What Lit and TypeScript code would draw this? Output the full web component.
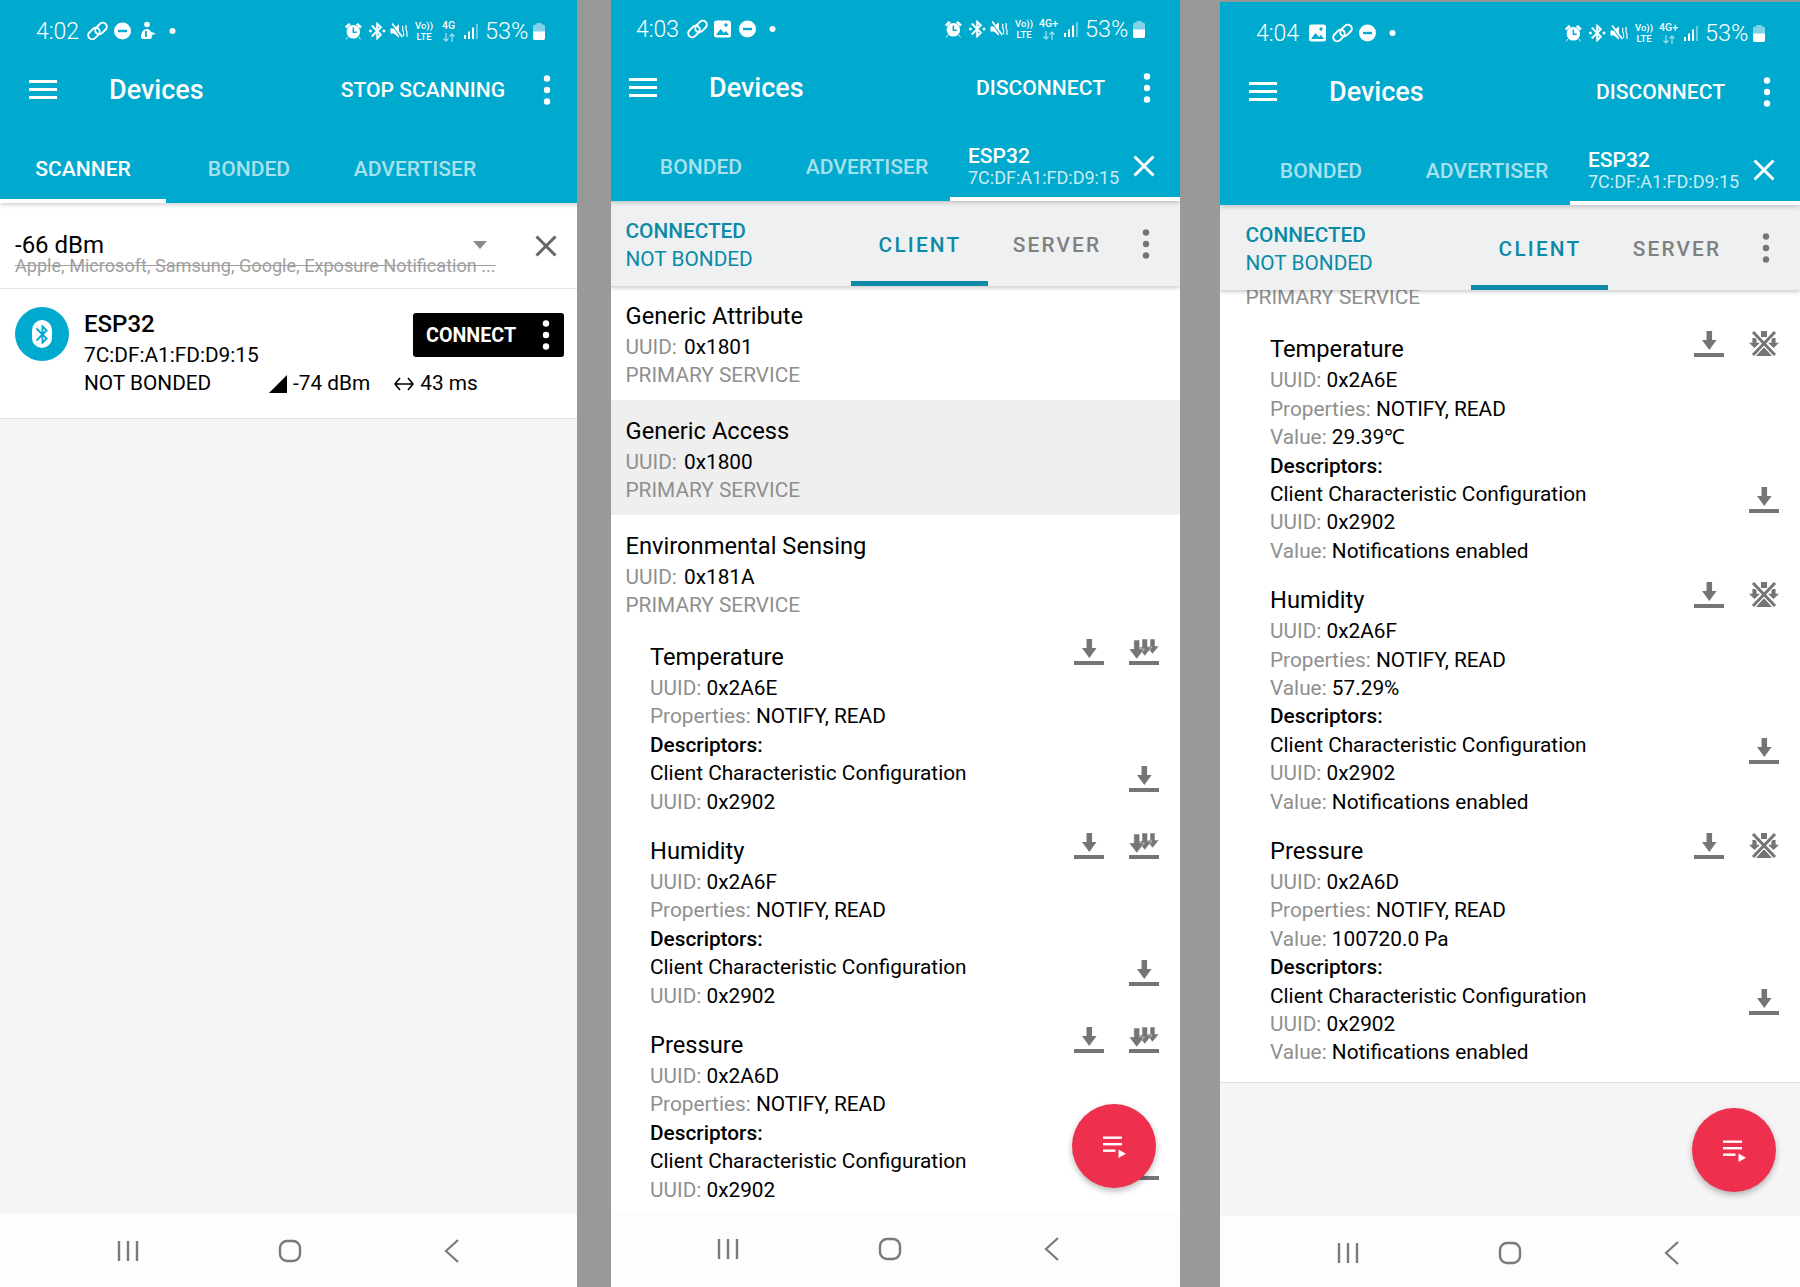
import { LitElement, css, html, svg } from 'lit'
import { customElement } from 'lit/decorators.js'

interface Descriptor { uuid: string; value?: string }
interface Characteristic { name: string; uuid: string; value?: string; descriptor: Descriptor }

const services = [
   { name: 'Generic Attribute', uuid: '0x1801', active: false },
   { name: 'Generic Access', uuid: '0x1800', active: true },
   { name: 'Environmental Sensing', uuid: '0x181A', active: false },
]

const plainChars: Characteristic[] = [
   { name: 'Temperature', uuid: '0x2A6E', descriptor: { uuid: '0x2902' } },
   { name: 'Humidity', uuid: '0x2A6F', descriptor: { uuid: '0x2902' } },
   { name: 'Pressure', uuid: '0x2A6D', descriptor: { uuid: '0x2902' } },
]

const readChars: Characteristic[] = [
   { name: 'Temperature', uuid: '0x2A6E', value: '29.39℃', descriptor: { uuid: '0x2902', value: 'Notifications enabled' } },
   { name: 'Humidity', uuid: '0x2A6F', value: '57.29%', descriptor: { uuid: '0x2902', value: 'Notifications enabled' } },
   { name: 'Pressure', uuid: '0x2A6D', value: '100720.0 Pa', descriptor: { uuid: '0x2902', value: 'Notifications enabled' } },
]

// status bar glyphs
const linkIcon = svg`<svg width="25" height="22" viewBox="0 0 25 22" fill="none" stroke="#fff" stroke-width="2"><rect x="2.5" y="9.5" width="13" height="8" rx="4" transform="rotate(-45 9 13.500)"/><rect x="9.5" y="4.500" width="13" height="8" rx="4" transform="rotate(-45 16 8.500)"/></svg>`
const dndIcon = svg`<svg width="25" height="22" viewBox="0 0 25 22"><circle cx="12.5" cy="11" r="8.5" fill="#fff"/><rect x="8" y="9.8" width="9" height="2.4" fill="#00a9ce"/></svg>`
const handIcon = svg`<svg width="25" height="22" viewBox="0 0 25 22" fill="#fff"><circle cx="12" cy="4.500" r="2.800"/><path d="M6 17c0-4.500 2.500-8 6-8 2 0 3.200 1 4.200 3l3.300 1c1 .4.600 1.800-.4 1.600l-1.800-.2c0 2.500-.8 4.600-2.300 4.600H8.500C7 19 6 18.200 6 17z"/><rect x="10" y="11" width="1.800" height="6" fill="#00a9ce"/></svg>`
const imageIcon = svg`<svg width="25" height="22" viewBox="0 0 25 22"><rect x="4" y="2.500" width="17" height="17" rx="2.500" fill="#fff"/><path d="M6 17l4.500-6 3.500 4 2-2 3 4z" fill="#00a9ce"/><circle cx="16" cy="7" r="1.700" fill="#00a9ce"/></svg>`
const dotIcon = svg`<svg width="25" height="22" viewBox="0 0 25 22"><circle cx="12.500" cy="11" r="3" fill="#fff"/></svg>`
const alarmIcon = svg`<svg width="23" height="22" viewBox="-3 -2 27 26"><circle cx="11.500" cy="12" r="8" fill="#fff"/><path d="M2 6l4-4 2 1.500-4.500 4zM21 6l-4-4-2 1.500 4.500 4zM5 18l-2 3M18 18l2 3" fill="#fff" stroke="#fff" stroke-width="1"/><path d="M11.500 7v5.500h4" fill="none" stroke="#00a9ce" stroke-width="1.800"/></svg>`
const btIcon = svg`<svg width="23" height="22" viewBox="-3 -1 26 26" fill="#fff" stroke="#fff" stroke-width=".5"><path d="M17.710 7.710L12 2h-1v7.590L6.410 5 5 6.410 10.590 12 5 17.590 6.410 19 11 14.410V22h1l5.710-5.710-4.300-4.290 4.300-4.290zM13 5.830l1.880 1.880L13 9.590V5.830zm1.880 10.460L13 18.170v-3.760l1.880 1.880z"/><circle cx="4" cy="12" r="1.500"/><circle cx="20" cy="12" r="1.500"/></svg>`
const muteIcon = svg`<svg width="23" height="22" viewBox="-2 -2 27 26"><path d="M2 8h4l6-5v16l-6-5H2z" fill="#fff"/><path d="M3 3l12 16" stroke="#00a9ce" stroke-width="1.500"/><path d="M4 2l12 16" stroke="#fff" stroke-width="2"/><path d="M16 5c2 2-1 3 1 6s-1 3 1 6M20 4c2 3-1 4 1 7s-1 4 1 7" fill="none" stroke="#fff" stroke-width="1.400"/></svg>`
const signalIcon = svg`<svg width="23" height="22" viewBox="0 0 23 22" fill="#fff"><rect x="5" y="15" width="2" height="4"/><rect x="9" y="11.500" width="2" height="7.500"/><rect x="13" y="7.500" width="2" height="11.500"/><rect x="17" y="4" width="1.800" height="15" opacity=".45"/></svg>`
const batteryIcon = svg`<svg width="12" height="17" viewBox="0 0 12 17"><path d="M3.500 0V1.500H2a2 2 0 0 0-2 2V15a2 2 0 0 0 2 2h8a2 2 0 0 0 2-2V3.500a2 2 0 0 0-2-2H8.500V0z" fill="#fff" opacity=".5"/><path d="M0 8.500h12V15a2 2 0 0 1-2 2H2a2 2 0 0 1-2-2z" fill="#fff"/></svg>`
const dataArrows = svg`<svg width="14" height="9" viewBox="0 0 14 9" fill="none" stroke="#fff" stroke-width="1.300"><path d="M4 0v8M1.500 5.500L4 8l2.500-2.500M10 9V1M7.500 3.500L10 1l2.500 2.500"/></svg>`

// action glyphs
const dots = (fill: string) => svg`<svg width="8" height="30" viewBox="0 0 8 30" fill=${fill}><circle cx="4" cy="3.500" r="3.200"/><circle cx="4" cy="15" r="3.200"/><circle cx="4" cy="26.500" r="3.200"/></svg>`
const closeIcon = (color: string) => svg`<svg width="22" height="22" viewBox="0 0 22 22" fill="none" stroke=${color} stroke-width="3"><path d="M1.500 1.500l19 19M20.500 1.500l-19 19"/></svg>`
const arrow = (x: number, y: number, w: number, h: number) => `M${x + w * 0.31} ${y}h${w * 0.38}v${h * 0.47}h${w * 0.31}L${x + w / 2} ${y + h}L${x} ${y + h * 0.47}h${w * 0.31}z`
const downloadIcon = svg`<svg class="act" viewBox="0 0 30 26" fill="#757575"><path d=${arrow(8, 0, 14.600, 19)}/><rect y="22" width="30" height="4"/></svg>`
const downloadAllIcon = svg`<svg class="act" viewBox="0 0 30 26" fill="#757575" stroke="#fff" stroke-width=".5"><path d=${arrow(17, 0, 13, 15)}/><path d=${arrow(8.500, 0, 14.500, 17)}/><path d=${arrow(0, 1, 15.500, 19)}/><rect y="22" width="30" height="4" stroke="none"/></svg>`
const notifyOffIcon = svg`<svg class="act" viewBox="0 0 30 26" fill="#757575"><path d=${arrow(0, 7, 11, 10)}/><path d=${arrow(19, 7, 11, 10)}/><rect x="12" y="0" width="6" height="6"/><path d="M7 25l8-9 8 9z"/><path d="M4 1l22 23M26 1L4 24" stroke="#fff" stroke-width="5" fill="none"/><path d="M4 1l22 23M26 1L4 24" stroke="#757575" stroke-width="3" fill="none"/></svg>`
const fabIcon = svg`<svg width="28" height="28" viewBox="0 0 28 28" fill="#fff"><rect x="3" y="4.500" width="19" height="2.400"/><rect x="3" y="11" width="19" height="2.400"/><rect x="3" y="17.500" width="12.500" height="2.400"/><path d="M18.500 17.500l7.500 4.200-7.500 4.200z"/></svg>`
const bluetoothGlyph = svg`<svg width="17" height="21" viewBox="4 1 16 22" fill="#00a9ce"><path d="M17.710 7.710L12 2h-1v7.590L6.410 5 5 6.410 10.590 12 5 17.590 6.410 19 11 14.410V22h1l5.710-5.710-4.300-4.290 4.300-4.290zM13 5.830l1.880 1.880L13 9.590V5.830zm1.880 10.460L13 18.170v-3.760l1.880 1.880z"/></svg>`

@customElement('app-root')
export class AppRoot extends LitElement {

   static styles = css`
      :host {
         display: flex;
         width: 1800px;
         height: 1287px;
         overflow: hidden;
         background: #999;
         font-family: Roboto, "Liberation Sans", sans-serif;
         color: #000;
      }

      .frame { height: 1287px; overflow: hidden; flex: none; display: flex; }
      .frame.one { width: 577px; }
      .frame.two { width: 569px; margin-left: 34px; }
      .frame.three { width: 580px; margin-left: 40px; padding-top: 2px; box-sizing: border-box; }

      .screen {
         position: relative;
         width: 580px;
         flex: none;
         display: flex;
         flex-direction: column;
         background: #fff;
      }
      .frame.two .screen { margin: -2px 0 0 -11px; }

      /* top */
      .head { background: #00a9ce; color: #fff; position: relative; z-index: 3; box-shadow: 0 2px 4px rgba(0,0,0,.18); }

      .status { height: 62px; display: flex; align-items: center; justify-content: space-between; padding: 0 35px 0 36px; }
      .status > div { display: flex; align-items: center; }
      .clock { width: 49px; font-size: 23px; font-weight: 300; }
      .pct { font-size: 23.500px; font-weight: 300; margin-left: 3px; width: 48px; }
      .tiny { font-size: 9.500px; font-weight: 500; line-height: 11.200px; text-align: center; }
      .volte { width: 28px; }
      .net { width: 21px; display: flex; flex-direction: column; align-items: center; font-size: 10.500px; line-height: 12.500px; }
      .net svg { opacity: .6; }

      .bar { height: 55px; display: flex; align-items: center; padding-left: 29px; }
      .burger { width: 28px; display: flex; flex-direction: column; gap: 5.200px; }
      .burger i { display: block; height: 2.800px; background: #fff; }
      .title { margin-left: 52px; font-size: 27px; font-weight: 500; flex: 1; }
      .action { font-size: 21.100px; font-weight: 500; margin-right: 38px; }
      .bar svg { margin-right: 29px; }

      .tabs { display: flex; height: 86px; }
      .tabs.shifted { padding-left: 18px; }
      .tab {
         width: 166px;
         box-sizing: border-box;
         padding: 30px 0 10px;
         border-bottom: 4px solid transparent;
         display: flex;
         align-items: center;
         justify-content: center;
         font-size: 21.100px;
         font-weight: 500;
         color: rgba(255,255,255,.68);
      }
      .tab.on { color: #fff; border-color: #fff; }
      .tab.device { flex: 1; justify-content: flex-start; padding: 32px 0 10px 18px; color: #fff; }
      .tab.device b { display: block; font-weight: 500; font-size: 21px; line-height: 22px; }
      .tab.device small { display: block; font-size: 18px; font-weight: 400; line-height: 22px; color: rgba(255,255,255,.8); }
      .tab.device svg { margin-left: 14px; margin-top: -2px; }

      /* body */
      .body { position: relative; height: 1011px; background: #f5f5f5; }
      .clip { height: 100%; overflow: hidden; display: flex; flex-direction: column; }

      .filter {
         height: 86px;
         box-sizing: border-box;
         flex: none;
         background: #fff;
         border-bottom: 1px solid #e4e4e4;
         display: flex;
         align-items: flex-start;
         padding: 27px 23px 0 15px;
         justify-content: space-between;
      }
      .filter > svg { margin-top: 5px; }
      .rssi-line { display: flex; align-items: center; justify-content: space-between; width: 472px; font-size: 24px; line-height: 30px; }
      .caret { width: 0; height: 0; border: 7.500px solid transparent; border-top: 8px solid #8a8a8a; border-bottom: 0; }
      .ignored { font-size: 18.100px; line-height: 16px; margin-top: -2px; color: #a0a0a0; text-decoration: line-through; white-space: nowrap; }

      .device-row {
         height: 130px;
         box-sizing: border-box;
         flex: none;
         background: #fff;
         border-bottom: 1px solid #e0e0e0;
         display: flex;
         gap: 15px;
         padding: 19px 16px 0 15px;
      }
      .avatar { width: 54px; height: 54px; margin-top: -1px; border-radius: 50%; background: #00a9ce; flex: none; display: flex; align-items: center; justify-content: center; }
      .pill { width: 20px; height: 28px; border-radius: 10px; background: #fff; display: flex; align-items: center; justify-content: center; }
      .info { flex: 1; }
      .info-top { display: flex; justify-content: space-between; }
      .info-name { font-size: 24px; line-height: 33px; font-weight: 500; }
      .line { font-size: 20.800px; line-height: 28.400px; white-space: nowrap; }
      .connect {
         margin-top: 5px;
         width: 151px;
         height: 44px;
         box-sizing: border-box;
         background: #000;
         color: #fff;
         border-radius: 3px;
         display: flex;
         align-items: center;
         justify-content: space-between;
         padding: 0 14px 0 13px;
         font-size: 19.700px;
         font-weight: 700;
      }
      .stats { display: flex; align-items: center; }
      .stats .bonded { width: 185px; }
      .stats svg { margin-right: 6px; flex: none; }
      .stats .ms { margin-left: 24px; }

      /* connection */
      .conn {
         height: 85px;
         flex: none;
         box-sizing: border-box;
         background: #eef0f2;
         box-shadow: 0 2px 4px rgba(0,0,0,.2);
         display: flex;
         position: relative;
         z-index: 2;
         padding-left: 25.500px;
      }
      .state { width: 225.500px; color: #0a8aa6; padding-top: 16px; }
      .state b { display: block; font-size: 20.800px; font-weight: 500; line-height: 28.400px; }
      .state span { display: block; font-size: 20.800px; line-height: 28.400px; }
      .ctab {
         width: 137px;
         box-sizing: border-box;
         display: flex;
         align-items: center;
         justify-content: center;
         border-bottom: 5px solid transparent;
         font-size: 20.800px;
         font-weight: 500;
         letter-spacing: 2.200px;
         color: #808080;
         padding: 7px 0 0 1px;
      }
      .ctab.on { color: #0a8aa6; border-color: #0a8aa6; }
      .conn-menu { margin-left: 17px; align-self: center; margin-top: 5px; }

      .list { background: #fff; flex: none; }
      .list.fill { flex: 1 0 auto; }
      .service { padding: 14.500px 0 10.700px 25.500px; }
      .service:first-child { padding-top: 13.500px; }
      .service .muted { margin-right: 2px; }
      .service.on { background: #efefef; }
      .svc-name { font-size: 23.700px; line-height: 33px; font-weight: 450; }
      .muted { color: #8f8f8f; }
      .svc-type { font-size: 20.800px; line-height: 28.400px; color: #8f8f8f; }

      .chars { padding: 11px 21px 0 50px; }
      .tail { padding-left: 25.500px; margin-top: -7px; }
      .tail + .chars { padding-top: 22px; padding-bottom: 15.500px; border-bottom: 1px solid #dedede; }
      .char { position: relative; margin-bottom: 19px; }
      .char:last-child { margin-bottom: 0; }
      .char-head { display: flex; justify-content: space-between; }
      .actions { display: flex; gap: 25px; margin-top: -2px; }
      .act { width: 30px; height: 26px; display: block; }
      .desc-name { display: flex; justify-content: space-between; height: 28.400px; }
      .desc-name .act { margin-top: 7px; }
      .desc-head { font-weight: 500; }

      .fab {
         position: absolute;
         right: 24.500px;
         bottom: 24px;
         width: 84px;
         height: 84px;
         border-radius: 50%;
         background: #ee2f4e;
         box-shadow: 0 3px 6px rgba(0,0,0,.28);
         display: flex;
         align-items: center;
         justify-content: center;
         z-index: 2;
      }

      .nav { flex: 1; display: flex; padding: 25px 0 0 47px; background: #fdfdfd; position: relative; z-index: 1; }
      .nav div { width: 162px; height: 24px; display: flex; justify-content: center; }
      .nav svg { fill: none; stroke: #7a7a7a; }
   `

   private statusBar(time: string, left: unknown[], network: string) {
      return html`
         <div class="status">
            <div><span class="clock">${time}</span>${left}</div>
            <div>
               ${alarmIcon}${btIcon}${muteIcon}
               <div class="tiny volte">Vo))<br />LTE</div>
               <div class="tiny net">${network}${dataArrows}</div>
               ${signalIcon}
               <span class="pct">53%</span>${batteryIcon}
            </div>
         </div>
      `
   }

   private appBar(action: string) {
      return html`
         <div class="bar">
            <div class="burger"><i></i><i></i><i></i></div>
            <div class="title">Devices</div>
            <div class="action">${action}</div>
            ${dots('#fff')}
         </div>
      `
   }

   private deviceTabs() {
      return html`
         <div class="tabs shifted">
            <div class="tab">BONDED</div>
            <div class="tab">ADVERTISER</div>
            <div class="tab on device">
               <div><b>ESP32</b><small>7C:DF:A1:FD:D9:15</small></div>
               ${closeIcon('#fff')}
            </div>
         </div>
      `
   }

   private connectionBar() {
      return html`
         <div class="conn">
            <div class="state"><b>CONNECTED</b><span>NOT BONDED</span></div>
            <div class="ctab on">CLIENT</div>
            <div class="ctab">SERVER</div>
            <div class="conn-menu">${dots('#757575')}</div>
         </div>
      `
   }

   private characteristic(c: Characteristic, notifying: boolean) {
      return html`
         <div class="char">
            <div class="char-head">
               <div class="svc-name">${c.name}</div>
               <div class="actions">${downloadIcon}${notifying ? notifyOffIcon : downloadAllIcon}</div>
            </div>
            <div class="line"><span class="muted">UUID:</span> ${c.uuid}</div>
            <div class="line"><span class="muted">Properties:</span> NOTIFY, READ</div>
            ${c.value ? html`<div class="line"><span class="muted">Value:</span> ${c.value}</div>` : ''}
            <div class="line desc-head">Descriptors:</div>
            <div class="line desc-name"><span>Client Characteristic Configuration</span>${downloadIcon}</div>
            <div class="line"><span class="muted">UUID:</span> ${c.descriptor.uuid}</div>
            ${c.descriptor.value ? html`<div class="line"><span class="muted">Value:</span> ${c.descriptor.value}</div>` : ''}
         </div>
      `
   }

   private navBar() {
      return html`
         <div class="nav">
            <div><svg width="24" height="24" viewBox="0 0 24 24" stroke-width="2.400"><path d="M3 2v20M12 2v20M21 2v20"/></svg></div>
            <div><svg width="24" height="24" viewBox="0 0 24 24" stroke-width="2.400"><rect x="2" y="2" width="20" height="20" rx="7"/></svg></div>
            <div><svg width="16" height="24" viewBox="0 0 16 24" stroke-width="2.200"><path d="M14 1L2 12l12 11"/></svg></div>
         </div>
      `
   }

   private scanner() {
      return html`
         <div class="screen">
            <div class="head">
               ${this.statusBar('4:02', [linkIcon, dndIcon, handIcon, dotIcon], '4G')}
               ${this.appBar('STOP SCANNING')}
               <div class="tabs">
                  <div class="tab on">SCANNER</div>
                  <div class="tab">BONDED</div>
                  <div class="tab">ADVERTISER</div>
               </div>
            </div>
            <div class="body">
               <div class="clip">
                  <div class="filter">
                     <div>
                        <div class="rssi-line"><span>-66 dBm</span><i class="caret"></i></div>
                        <div class="ignored">Apple, Microsoft, Samsung, Google, Exposure Notification ...</div>
                     </div>
                     ${closeIcon('#666')}
                  </div>
                  <div class="device-row">
                     <div class="avatar"><div class="pill">${bluetoothGlyph}</div></div>
                     <div class="info">
                        <div class="info-top">
                           <div>
                              <div class="info-name">ESP32</div>
                              <div class="line">7C:DF:A1:FD:D9:15</div>
                           </div>
                           <div class="connect">CONNECT ${dots('#fff')}</div>
                        </div>
                        <div class="line stats">
                           <span class="bonded">NOT BONDED</span>
                           <svg width="18" height="18" viewBox="0 0 18 18"><path d="M0 18L18 0v18z"/></svg>
                           <span>-74 dBm</span>
                           <svg class="ms" width="20" height="14" viewBox="0 0 20 14" fill="none" stroke="#000" stroke-width="1.600"><path d="M1 7h18M6 1L1 7l5 6M14 1l5 6-5 6"/></svg>
                           <span>43 ms</span>
                        </div>
                     </div>
                  </div>
               </div>
            </div>
            ${this.navBar()}
         </div>
      `
   }

   private client() {
      return html`
         <div class="screen">
            <div class="head">
               ${this.statusBar('4:03', [linkIcon, imageIcon, dndIcon, dotIcon], '4G+')}
               ${this.appBar('DISCONNECT')}
               ${this.deviceTabs()}
            </div>
            <div class="body">
               <div class="clip">
                  ${this.connectionBar()}
                  <div class="list fill">
                     ${services.map(s => html`
                        <div class="service ${s.active ? 'on' : ''}">
                           <div class="svc-name">${s.name}</div>
                           <div class="line"><span class="muted">UUID:</span> ${s.uuid}</div>
                           <div class="svc-type">PRIMARY SERVICE</div>
                        </div>
                     `)}
                     <div class="chars">${plainChars.map(c => this.characteristic(c, false))}</div>
                  </div>
               </div>
               <div class="fab">${fabIcon}</div>
            </div>
            ${this.navBar()}
         </div>
      `
   }

   private clientRead() {
      return html`
         <div class="screen">
            <div class="head">
               ${this.statusBar('4:04', [imageIcon, linkIcon, dndIcon, dotIcon], '4G+')}
               ${this.appBar('DISCONNECT')}
               ${this.deviceTabs()}
            </div>
            <div class="body">
               <div class="clip">
                  ${this.connectionBar()}
                  <div class="list">
                     <div class="svc-type tail">PRIMARY SERVICE</div>
                     <div class="chars">${readChars.map(c => this.characteristic(c, true))}</div>
                  </div>
               </div>
               <div class="fab">${fabIcon}</div>
            </div>
            ${this.navBar()}
         </div>
      `
   }

   render() {
      return html`
         <div class="frame one">${this.scanner()}</div>
         <div class="frame two">${this.client()}</div>
         <div class="frame three">${this.clientRead()}</div>
      `
   }
}
